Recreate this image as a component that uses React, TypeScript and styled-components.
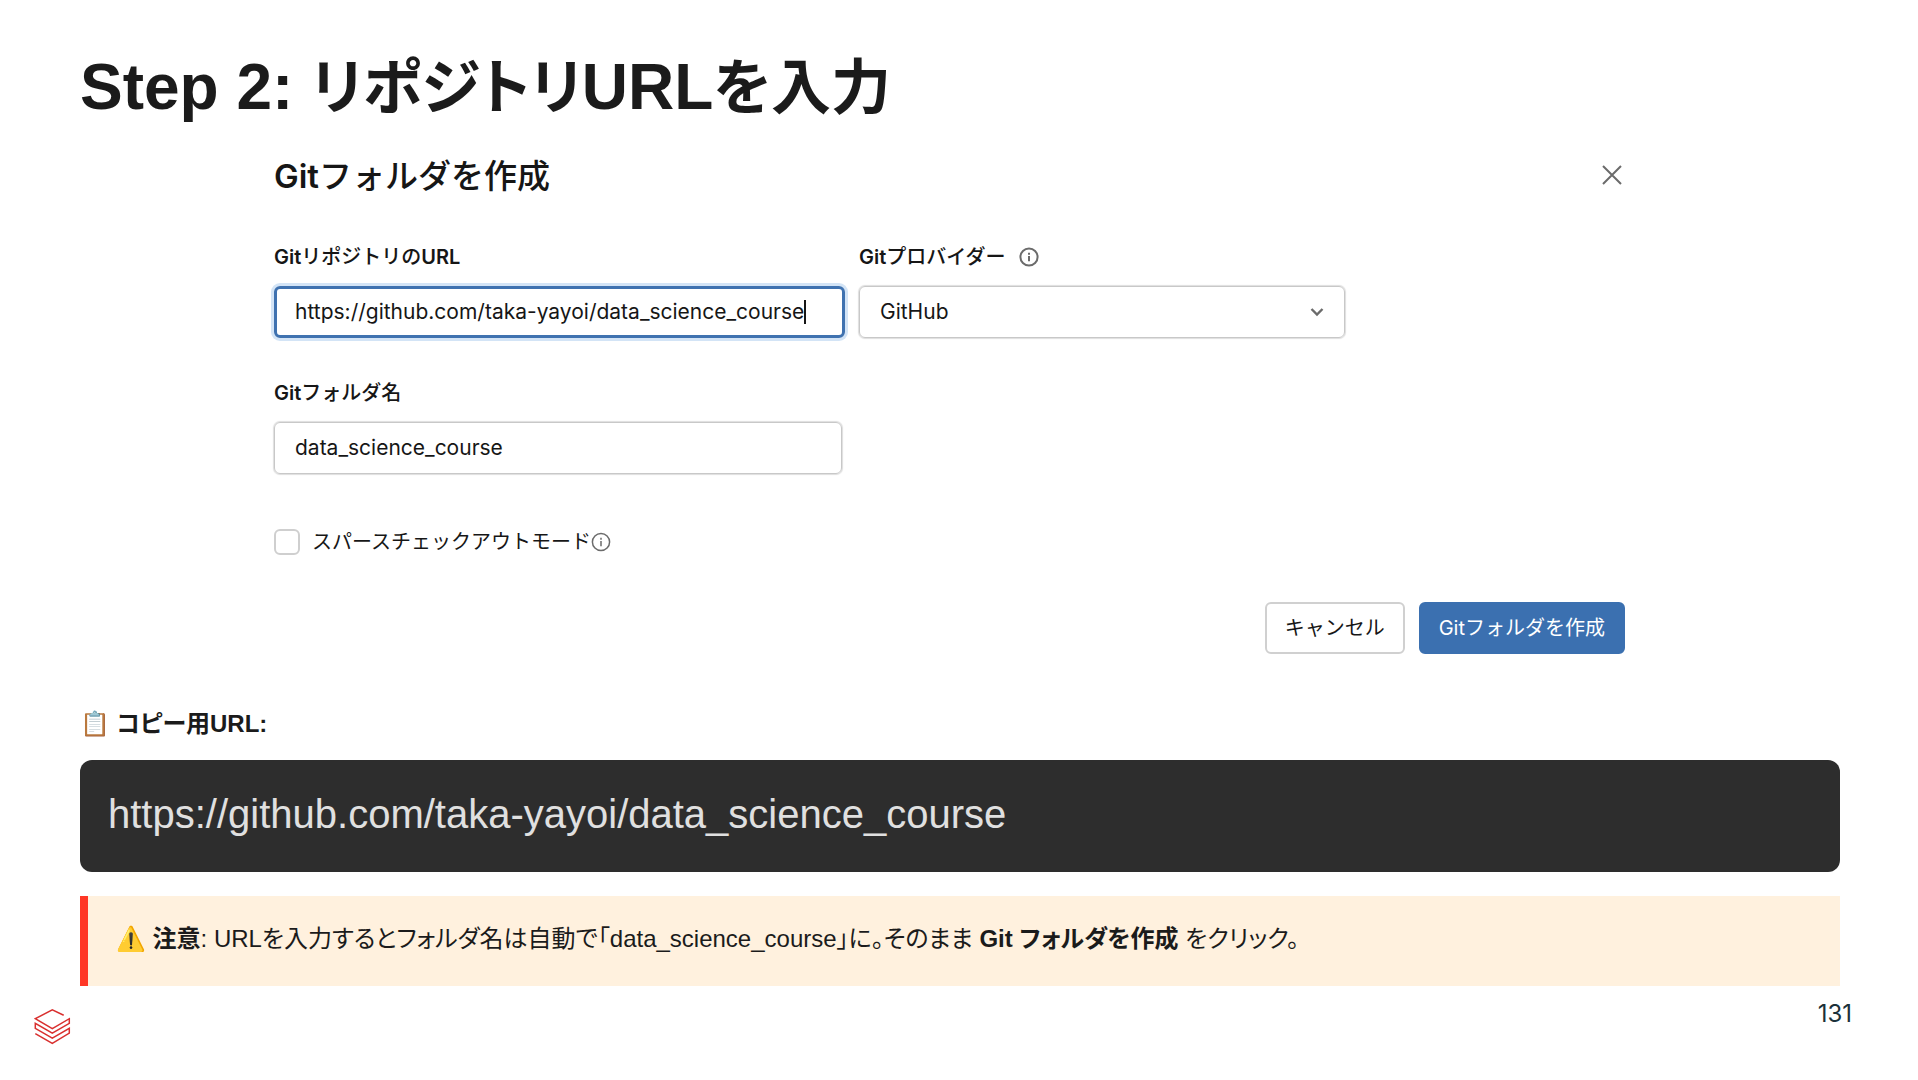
import React, { useState } from "react";
import styled, { createGlobalStyle } from "styled-components";

const GlobalStyle = createGlobalStyle`
  *, *::before, *::after { box-sizing: border-box; }
  body { margin: 0; background: #ffffff; }
`;

const slideFont = `"Liberation Sans", "Noto Sans CJK JP", "Noto Color Emoji", sans-serif`;
const uiFont = `Inter, "Noto Sans CJK JP", sans-serif`;

const Slide = styled.main`
  display: flex;
  flex-direction: column;
  min-height: 100vh;
  padding: 51px 78px 0 80px;
  color: #1b1b1b;
  font-family: ${slideFont};
  font-feature-settings: "palt";
`;

const SlideTitle = styled.h1`
  margin: 0;
  font-size: 64px;
  line-height: 72px;
  font-weight: 700;
`;

const TitleKana = styled.span`
  font-size: 60px;
`;

const Dialog = styled.section`
  display: flex;
  flex-direction: column;
  margin: 31px 215px 0 194px;
  font-family: ${uiFont};
  font-feature-settings: normal;
  font-size: 20px;
  line-height: 28px;
  color: #161616;
`;

const DialogHeader = styled.header`
  display: flex;
  align-items: center;
  justify-content: space-between;
`;

const DialogTitle = styled.h2`
  margin: 0;
  font-size: 33px;
  line-height: 40px;
  font-weight: 600;
`;

const Medium = styled.span`
  font-weight: 500;
`;

const CloseButton = styled.button`
  display: flex;
  padding: 0;
  border: 0;
  background: none;
  color: #6b6b6b;
`;

const FieldRow = styled.div<{ $top: number }>`
  display: grid;
  grid-template-columns: 568fr 486fr 263fr;
  column-gap: 17px;
  margin-top: ${(p) => p.$top}px;
`;

const Field = styled.div`
  display: flex;
  flex-direction: column;
  gap: 15px;
`;

const LabelRow = styled.div`
  display: flex;
  align-items: center;
  gap: 14px;
  color: #6b6b6b;
`;

const Label = styled.label`
  font-weight: 600;
  color: #161616;
`;

const Control = styled.div<{ $focused?: boolean }>`
  display: flex;
  align-items: center;
  height: 52px;
  margin-right: ${(p) => (p.$focused ? -3 : 0)}px;
  padding: 0 ${(p) => (p.$focused ? 18 : 20)}px;
  border: ${(p) => (p.$focused ? "3px solid #3f72b0" : "1px solid #c8c8c8")};
  border-radius: 6px;
  box-shadow: ${(p) => (p.$focused ? "0 0 0 3px #d3e4f6" : "0 0 1px 1px #dedede")};
  font-size: 21px;
  color: #6b6b6b;
`;

const TextInput = styled.input<{ $hug?: boolean }>`
  flex: ${(p) => (p.$hug ? "none" : "1")};
  field-sizing: ${(p) => (p.$hug ? "content" : "fixed")};
  min-width: 0;
  padding: 0;
  border: 0;
  outline: 0;
  background: none;
  font: inherit;
  color: #161616;
`;

const Caret = styled.span`
  width: 2px;
  height: 24px;
  background: #161616;
`;

const Select = styled.select`
  flex: 1;
  padding: 0;
  border: 0;
  outline: 0;
  appearance: none;
  background: none;
  font: inherit;
  color: #161616;
`;

const CheckRow = styled.div`
  display: flex;
  align-items: center;
  margin-top: 54px;
  color: #6b6b6b;
`;

const Checkbox = styled.input`
  appearance: none;
  width: 26px;
  height: 26px;
  margin: 0 12px 0 0;
  border: 2px solid #cfcfcf;
  border-radius: 6px;
  background: #ffffff;
`;

const CheckLabel = styled.label`
  color: #161616;
`;

const Actions = styled.div`
  display: flex;
  justify-content: flex-end;
  gap: 14px;
  margin-top: 46px;
`;

const Button = styled.button<{ $primary?: boolean }>`
  height: 52px;
  padding: 0 18px;
  border: 2px solid ${(p) => (p.$primary ? "#3b70b0" : "#d0d0d0")};
  border-radius: 6px;
  background: ${(p) => (p.$primary ? "#3b70b0" : "#ffffff")};
  color: ${(p) => (p.$primary ? "#ffffff" : "#161616")};
  font: inherit;
`;

const CopyHeading = styled.h3`
  margin: 54px 0 0;
  font-size: 24px;
  line-height: 32px;
  font-weight: 700;
`;

const CodeBlock = styled.div`
  margin-top: 20px;
  padding: 26px 28px 30px;
  border-radius: 12px;
  background: #2d2d2d;
  color: #e0e0e0;
  font-size: 40px;
  line-height: 56px;
`;

const Notice = styled.p`
  margin: 24px 0 0;
  padding: 23px 28px 27px;
  border-left: 8px solid #ff3726;
  background: #fff1de;
  font-size: 24px;
  line-height: 40px;
`;

const Footer = styled.footer`
  display: flex;
  align-items: flex-start;
  justify-content: space-between;
  margin: 8px -12px 0 -46px;
  font-family: Inter, sans-serif;
  font-size: 24px;
  line-height: 40px;
  color: #1b3139;
`;

const Logo = styled.svg`
  margin-top: 15px;
`;

function InfoIcon({ stroke }: { stroke: number }) {
  return (
    <svg width="20" height="20" viewBox="0 0 20 20" fill="none" stroke="currentColor" strokeWidth={stroke} aria-hidden="true">
      <circle cx="10" cy="10" r="8.6" />
      <path d="M10 9v5.2M10 5.8v2" />
    </svg>
  );
}

export default function App() {
  const [url, setUrl] = useState("https://github.com/taka-yayoi/data_science_course");
  const [folder, setFolder] = useState("data_science_course");

  return (
    <>
      <GlobalStyle />
      <Slide lang="ja">
        <SlideTitle>
          Step 2: <TitleKana>リポジトリ</TitleKana>URL<TitleKana>を入力</TitleKana>
        </SlideTitle>

        <Dialog aria-labelledby="dialog-title">
          <DialogHeader>
            <DialogTitle id="dialog-title">Git<Medium>フォルダを作成</Medium></DialogTitle>
            <CloseButton type="button" aria-label="閉じる">
              <svg width="26" height="26" viewBox="0 0 26 26" fill="none" stroke="currentColor" strokeWidth="2" aria-hidden="true">
                <path d="M4 3l18 18M22 3L4 21" />
              </svg>
            </CloseButton>
          </DialogHeader>

          <FieldRow $top={47}>
            <Field>
              <Label htmlFor="repo-url">Git<Medium>リポジトリの</Medium>URL</Label>
              <Control $focused>
                <TextInput id="repo-url" $hug value={url} onChange={(e) => setUrl(e.target.value)} />
                <Caret />
              </Control>
            </Field>
            <Field>
              <LabelRow>
                <Label htmlFor="provider">Git<Medium>プロバイダー</Medium></Label>
                <InfoIcon stroke={2} />
              </LabelRow>
              <Control>
                <Select id="provider" defaultValue="github">
                  <option value="github">GitHub</option>
                </Select>
                <svg width="14" height="10" viewBox="0 0 14 10" fill="none" stroke="currentColor" strokeWidth="2.4" aria-hidden="true">
                  <path d="M1.500 2l5.500 5.500L12.500 2" />
                </svg>
              </Control>
            </Field>
          </FieldRow>

          <FieldRow $top={41}>
            <Field>
              <Label htmlFor="folder-name">Git<Medium>フォルダ名</Medium></Label>
              <Control>
                <TextInput id="folder-name" value={folder} onChange={(e) => setFolder(e.target.value)} />
              </Control>
            </Field>
          </FieldRow>

          <CheckRow>
            <Checkbox type="checkbox" id="sparse" />
            <CheckLabel htmlFor="sparse">スパースチェックアウトモード</CheckLabel>
            <InfoIcon stroke={1.5} />
          </CheckRow>

          <Actions>
            <Button type="button">キャンセル</Button>
            <Button type="button" $primary>Gitフォルダを作成</Button>
          </Actions>
        </Dialog>

        <CopyHeading>📋 コピー用URL:</CopyHeading>
        <CodeBlock>https://github.com/taka-yayoi/data_science_course</CodeBlock>
        <Notice>
          ⚠️ <strong>注意</strong>: URLを入力するとフォルダ名は自動で「data_science_course」に。そのまま <strong>Git フォルダを作成</strong> をクリック。
        </Notice>

        <Footer>
          <Logo width="37" height="36" viewBox="0 0 37 36" fill="none" stroke="#d9302f" strokeWidth="1.5" aria-hidden="true">
            <path d="M29.7 6.3L18.3 0.900 1.3 9.700l17 10 17-10v4.600L18.3 24.200l-17-9.900v5l17 9.900 17-9.900v4.900L18.3 34.500l-17-9.800" />
          </Logo>
          <span>131</span>
        </Footer>
      </Slide>
    </>
  );
}
